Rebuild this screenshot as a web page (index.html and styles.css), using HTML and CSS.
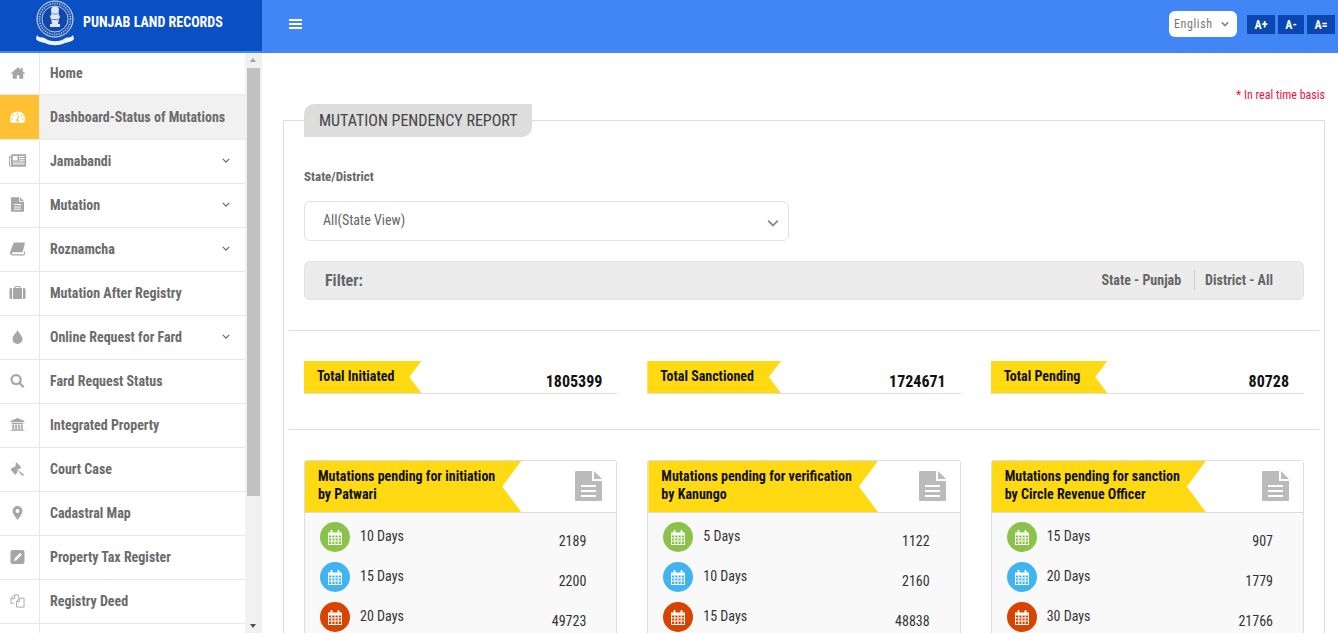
FILE: index.html
```html
<!DOCTYPE html>
<html lang="en">
<head>
<meta charset="utf-8">
<title>Punjab Land Records</title>
<link rel="stylesheet" href="styles.css">
</head>
<body>
<svg class="defs" width="0" height="0" aria-hidden="true">
  <symbol id="i-doc" viewBox="0 0 27 30"><path d="M1 0h16v10h10v19a1 1 0 0 1-1 1H1a1 1 0 0 1-1-1V1a1 1 0 0 1 1-1zM19 0l8 8h-8zM6 14v2h15v-2zM6 19v2h15v-2zM6 24v2h15v-2z" fill-rule="evenodd"/></symbol>
  <symbol id="i-cal" viewBox="0 0 14 15"><path d="M0 2.5h2.5V1a1 1 0 0 1 2 0v1.500h5V1a1 1 0 0 1 2 0v1.500H14V15H0zM1 5.500v2h2.300v-2zM4.300 5.500v2h2.200v-2zM7.500 5.500v2h2.200v-2zM10.700 5.500v2H13v-2zM1 8.500v2h2.300v-2zM4.300 8.500v2h2.200v-2zM7.500 8.500v2h2.200v-2zM10.700 8.500v2H13v-2zM1 11.500V14h2.300v-2.500zM4.300 11.500V14h2.200v-2.500zM7.500 11.500V14h2.200v-2.500zM10.700 11.500V14H13v-2.500z" fill-rule="evenodd"/></symbol>
  <symbol id="i-chev" viewBox="0 0 10 6"><path d="M1 1l4 4 4-4" fill="none" stroke="currentColor"/></symbol>
</svg>

<header class="topbar">
  <div class="brand">
    <svg class="crest" viewBox="0 0 40 46" aria-hidden="true">
      <circle cx="20" cy="19" r="18" fill="#1d55b5" stroke="#e6edf8" stroke-width="1"/>
      <circle cx="20" cy="19" r="15.500" fill="none" stroke="#b9cbec" stroke-width="1.500" stroke-dasharray="1.200 1.200"/>
      <circle cx="20" cy="19" r="13" fill="#1148ad" stroke="#dbe5f5" stroke-width=".8"/>
      <path d="M16 9c1-2 2-2.500 4-2.500s3 .5 4 2.500l-.5 5 1.500 2.500-1 2.500-1 5h2v3H15v-3h2l-1-5-1-2.500 1.500-2.500z" fill="#dfe7f4"/>
      <path d="M17.500 14h5M16.500 19.500h7" stroke="#5f86cb" stroke-width="1"/>
      <path d="M2 35c3 4 6 1 9 4 5 3 13 3 18 0 3-3 6 0 9-4l1 4c-2 3-6 3-9 4-6 3-14 3-20 0-3-1-7-1-9-4z" fill="#f1f4fa"/>
    </svg>
    <span class="brand-name">PUNJAB LAND RECORDS</span>
  </div>
  <div class="topbar-main">
    <button class="burger" aria-label="Menu"><span></span><span></span><span></span></button>
    <div class="top-tools">
      <div class="lang"><span>English</span><svg class="lang-chev"><use href="#i-chev"/></svg></div>
      <div class="font-btns">
        <span class="font-btn">A+</span><span class="font-btn narrow">A-</span><span class="font-btn">A=</span>
      </div>
    </div>
  </div>
</header>

<div class="shell">
  <aside class="sidebar">
    <nav class="menu">
      <a class="item"><span class="ico"><svg class="s-home" viewBox="0 0 24 20"><path d="M12 0L0 10.500l1.300 1.500L3 10.600V20h7v-6h4v6h7v-9.400l1.700 1.400 1.300-1.500-4-3.500V1h-3v3.200z"/></svg></span><span class="lbl">Home</span></a>
      <a class="item active"><span class="ico"><svg viewBox="0 0 24 18"><path d="M12 0a12 12 0 0 0-12 12c0 2 .5 4 1.500 6h21c1-2 1.500-4 1.500-6A12 12 0 0 0 12 0zM12 2.500a1.300 1.300 0 1 1 0 2.600 1.300 1.300 0 0 1 0-2.600zM5.500 5a1.300 1.300 0 1 1 0 2.600 1.300 1.300 0 0 1 0-2.600zM18.500 5a1.300 1.300 0 1 1 0 2.600 1.300 1.300 0 0 1 0-2.600zM3.500 10.800a1.300 1.300 0 1 1 0 2.600 1.300 1.300 0 0 1 0-2.600zM20.500 10.800a1.300 1.300 0 1 1 0 2.600 1.300 1.300 0 0 1 0-2.600zM14.500 6.500l-1.400 6.100a2 2 0 1 1-1.700-.3l1.500-6.200z" fill-rule="evenodd"/></svg></span><span class="lbl">Dashboard-Status of Mutations</span></a>
      <a class="item"><span class="ico"><svg class="s-wide" viewBox="0 0 18 13"><path d="M2.500 0H18v13H1.500A1.500 1.500 0 0 1 0 11.500V2h2.500zM1 3v8.500a.5.5 0 0 0 1 0.200V3zM4 1.800v4.700h5V1.800zM10.500 1.800v1h6v-1zM10.500 3.800v1h6v-1zM10.500 5.700v1h6v-1zM4 7.700v1h12.500v-1zM4 9.800v1h12.500v-1z" fill-rule="evenodd"/></svg></span><span class="lbl">Jamabandi</span><svg class="chev"><use href="#i-chev"/></svg></a>
      <a class="item"><span class="ico"><svg class="s-doc"><use href="#i-doc"/></svg></span><span class="lbl">Mutation</span><svg class="chev"><use href="#i-chev"/></svg></a>
      <a class="item"><span class="ico"><svg viewBox="0 0 16 14"><path d="M4 0h12l-2.500 10.500H3a1 1 0 0 0-1 1.200c.1.500.5.800 1 .8h11.500L16 8v4.500L15 14H3a3 3 0 0 1-3-3.500z"/></svg></span><span class="lbl">Roznamcha</span><svg class="chev"><use href="#i-chev"/></svg></a>
      <a class="item"><span class="ico"><svg class="s-wide" viewBox="0 0 16 13"><path d="M5 2V1a1 1 0 0 1 1-1h4a1 1 0 0 1 1 1v1h1.500v11h-9V2zM6 2h4V1H6zM0 3.500A1.500 1.500 0 0 1 1.500 2h1v11h-1A1.500 1.500 0 0 1 0 11.500zM13.500 2h1A1.500 1.500 0 0 1 16 3.500v8a1.500 1.500 0 0 1-1.500 1.500h-1z" fill-rule="evenodd"/></svg></span><span class="lbl">Mutation After Registry</span></a>
      <a class="item"><span class="ico"><svg viewBox="0 0 10 14"><path d="M5 0c1 3 5 5.500 5 9a5 5 0 0 1-10 0c0-3.500 4-6 5-9z"/></svg></span><span class="lbl">Online Request for Fard</span><svg class="chev"><use href="#i-chev"/></svg></a>
      <a class="item"><span class="ico"><svg viewBox="0 0 15 15"><path d="M6 0a6 6 0 0 1 5 9.300l4 4L13.300 15l-4-4A6 6 0 1 1 6 0zm0 2.300a3.700 3.700 0 1 0 0 7.400 3.700 3.700 0 0 0 0-7.400z" fill-rule="evenodd"/></svg></span><span class="lbl">Fard Request Status</span></a>
      <a class="item"><span class="ico"><svg class="s-wide" viewBox="0 0 16 15"><path d="M8 0l8 3.500V5H0V3.500zM1.500 5.800h13v1h-13zM2 7.500h2v4.500H2zM5.300 7.500h2v4.500h-2zM8.700 7.500h2v4.500h-2zM12 7.500h2v4.500h-2zM1.500 12.500h13v1h-13zM0 14h16v1H0z"/></svg></span><span class="lbl">Integrated Property</span></a>
      <a class="item"><span class="ico"><svg viewBox="0 0 15 15"><path d="M6 0l5.500 5.500-2.500 2.500-.7-.7-1 1L14.500 13.500 13 15 7.800 9.500l-1 1 .7.7L5 13.700 0 8l2.500-2.500.7.700 2.800-2.800-.7-.7z"/></svg></span><span class="lbl">Court Case</span></a>
      <a class="item"><span class="ico"><svg viewBox="0 0 10 14"><path d="M5 0a5 5 0 0 1 5 5c0 3-3 6-5 9-2-3-5-6-5-9a5 5 0 0 1 5-5zm0 3a2 2 0 1 0 0 4 2 2 0 0 0 0-4z" fill-rule="evenodd"/></svg></span><span class="lbl">Cadastral Map</span></a>
      <a class="item"><span class="ico"><svg viewBox="0 0 14 14"><path d="M2 0h10a2 2 0 0 1 2 2v10a2 2 0 0 1-2 2H2a2 2 0 0 1-2-2V2a2 2 0 0 1 2-2zM9.500 3L4 8.500 3.300 11l2.500-.7L11.300 4.800z" fill-rule="evenodd"/></svg></span><span class="lbl">Property Tax Register</span></a>
      <a class="item"><span class="ico"><svg viewBox="0 0 16 15" class="outline"><path d="M4 10H1V5l4-4h4v3M5 1v4H1M7 14V8l3-3.500h5V14zM10 4.500V8H7"/></svg></span><span class="lbl">Registry Deed</span></a>
      <a class="item"><span class="ico"></span><span class="lbl"></span></a>
    </nav>
    <div class="scrollbar">
      <span class="arrow up"></span>
      <span class="thumb"></span>
      <span class="arrow down"></span>
    </div>
  </aside>

  <main class="main">
    <p class="realtime">* In real time basis</p>
    <section class="panel">
      <h1 class="panel-tab">MUTATION PENDENCY REPORT</h1>
      <div class="inset">
        <label class="field-label">State/District</label>
        <div class="select"><span>All(State View)</span><svg class="select-chev"><use href="#i-chev"/></svg></div>
        <div class="filter">
          <strong class="filter-title">Filter:</strong>
          <div class="filter-vals"><span>State - Punjab</span><span class="filter-sep">District - All</span></div>
        </div>
      </div>
      <hr class="rule rule-a">
      <div class="grid3 totals inset">
        <div class="total"><span class="ribbon">Total Initiated</span><b>1805399</b></div>
        <div class="total"><span class="ribbon">Total Sanctioned</span><b>1724671</b></div>
        <div class="total"><span class="ribbon">Total Pending</span><b>80728</b></div>
      </div>
      <hr class="rule rule-b">
      <div class="grid3 inset">
        <article class="card">
          <div class="card-head"><h2>Mutations pending for initiation<br>by Patwari</h2><svg class="card-doc"><use href="#i-doc"/></svg></div>
          <ul class="rows">
            <li><span class="dot green"><svg><use href="#i-cal"/></svg></span><span class="days">10 Days</span><span class="num">2189</span></li>
            <li><span class="dot blue"><svg><use href="#i-cal"/></svg></span><span class="days">15 Days</span><span class="num">2200</span></li>
            <li><span class="dot red"><svg><use href="#i-cal"/></svg></span><span class="days">20 Days</span><span class="num">49723</span></li>
          </ul>
        </article>
        <article class="card">
          <div class="card-head"><h2>Mutations pending for verification<br>by Kanungo</h2><svg class="card-doc"><use href="#i-doc"/></svg></div>
          <ul class="rows">
            <li><span class="dot green"><svg><use href="#i-cal"/></svg></span><span class="days">5 Days</span><span class="num">1122</span></li>
            <li><span class="dot blue"><svg><use href="#i-cal"/></svg></span><span class="days">10 Days</span><span class="num">2160</span></li>
            <li><span class="dot red"><svg><use href="#i-cal"/></svg></span><span class="days">15 Days</span><span class="num">48838</span></li>
          </ul>
        </article>
        <article class="card">
          <div class="card-head"><h2>Mutations pending for sanction<br>by Circle Revenue Officer</h2><svg class="card-doc"><use href="#i-doc"/></svg></div>
          <ul class="rows">
            <li><span class="dot green"><svg><use href="#i-cal"/></svg></span><span class="days">15 Days</span><span class="num">907</span></li>
            <li><span class="dot blue"><svg><use href="#i-cal"/></svg></span><span class="days">20 Days</span><span class="num">1779</span></li>
            <li><span class="dot red"><svg><use href="#i-cal"/></svg></span><span class="days">30 Days</span><span class="num">21766</span></li>
          </ul>
        </article>
      </div>
    </section>
  </main>
</div>
</body>
</html>
```

FILE: styles.css
```css
* { box-sizing: border-box; }
html, body { margin: 0; height: 100%; overflow: hidden; }
body { font-family: Roboto, "Liberation Sans", sans-serif; font-stretch: 75%; font-size: 14px; color: #333; background: #fff; }
.defs { position: absolute; }
svg { display: block; fill: currentColor; stroke-width: 1.2; }

.topbar { display: flex; height: 53px; background: #4285f4; position: relative; z-index: 2; }
.brand { width: 262px; height: 51px; background: #0a50c4; display: flex; align-items: flex-start; padding-left: 35px; }
.crest { width: 40px; height: 46px; }
.brand-name { margin: 14px 0 0 8px; font-size: 14px; font-weight: 700; color: #fff; }
.topbar-main { flex: 1; display: flex; align-items: center; justify-content: space-between; padding: 0 3px 0 27px; }
.burger { width: 13px; padding: 0; margin-top: -5px; border: 0; background: none; display: flex; flex-direction: column; gap: 2px; }
.burger span { height: 2px; background: #fff; display: block; }
.top-tools { display: flex; align-items: center; gap: 10px; margin-top: -5px; }
.lang { width: 68px; height: 26px; background: #fff; border-radius: 6px; display: flex; align-items: center; padding-left: 5px; gap: 8px; color: #777; font-size: 12px; letter-spacing: .6px; }
.lang-chev { width: 8px; height: 6px; color: #888; stroke-width: 2; }
.font-btns { display: flex; gap: 3px; margin-top: 1px; }
.font-btn { width: 28px; height: 19px; background: #0a47b0; color: #fff; font-size: 12px; font-weight: 700; display: flex; align-items: center; justify-content: center; }
.font-btn.narrow { width: 26px; }

.shell { display: flex; height: 580px; }
.sidebar { width: 262px; flex: none; display: flex; overflow: hidden; }
.menu { width: 245px; margin-top: -2px; flex: none; }
.item { display: flex; align-items: center; height: 44px; border-bottom: 1px solid #e8e8e8; color: #6b6b6b; font-weight: 700; font-size: 14px; padding-right: 15px; }
.ico { width: 40px; height: 100%; flex: none; border-right: 1px solid #e8e8e8; display: flex; align-items: center; justify-content: center; color: #a6a6a6; padding-right: 4px; }
.ico svg { width: 15px; height: 14px; }
.ico svg.s-home { width: 14px; height: 12px; }
.ico svg.s-wide { width: 17px; height: 13px; }
.ico svg.s-doc { width: 13px; height: 15px; }
.ico svg.outline { fill: none; stroke: currentColor; stroke-width: 1; }
.lbl { flex: 1; padding-left: 10px; }
.chev { width: 8px; height: 5px; color: #666; stroke-width: 1.500; }
.item.active { height: 45px; background: #f1f1f1; }
.item.active .ico { background: #ffc033; color: #fff; }
.item.active ~ .item .lbl { padding-bottom: 2px; }
.item.active ~ .item .chev,
.item.active ~ .item .ico svg { margin-bottom: 2px; }
.scrollbar { width: 17px; background: #f1f1f1; display: flex; flex-direction: column; align-items: stretch; }
.arrow { height: 15px; flex: none; position: relative; }
.arrow::after { content: ""; position: absolute; left: 5px; border: 3.500px solid transparent; }
.arrow.up::after { top: 2px; border-bottom: 4px solid #a3a3a3; }
.arrow.down::after { bottom: 2px; border-top: 4px solid #505050; }
.thumb { height: 428px; background: #c1c1c1; margin: 0 2px; }
.scrollbar .down { margin-top: auto; }

.main { flex: 1; min-width: 0; padding: 35px 13px 0 21px; overflow: hidden; }
.realtime { margin: 0; height: 32px; text-align: right; color: #f0143c; font-size: 12px; }
.panel { border: 1px solid #ddd; }
.panel-tab { margin: -17px 0 0 20px; height: 33px; width: 228px; background: #ddd; border-radius: 10px 0 10px 0; font-size: 16px; font-weight: 400; line-height: 33px; padding-left: 15px; color: #444; }
.inset { margin: 0 20px; }
.field-label { display: block; margin-top: 27px; font-size: 13px; font-weight: 700; color: #666; line-height: 26px; }
.select { margin-top: 11px; width: 485px; height: 40px; border: 1px solid #e2e2e2; border-radius: 6px; display: flex; align-items: center; justify-content: space-between; padding: 0 9px 2px 18px; color: #666; font-size: 14px; }
.select-chev { width: 12px; height: 8px; color: #888; margin-top: 6px; stroke-width: 1.5; }
.filter { margin-top: 20px; height: 39px; background: #ececec; border: 1px solid #e2e2e2; border-radius: 6px; display: flex; align-items: center; justify-content: space-between; padding: 0 30px 0 20px; color: #666; }
.filter-title { font-size: 16px; }
.filter-vals { display: flex; align-items: center; font-weight: 700; font-size: 14px; margin-top: -1px; }
.filter-sep { border-left: 1px solid #ccc; margin-left: 13px; padding-left: 10px; line-height: 20px; }
.rule { border: 0; border-top: 1px solid #ddd; margin: 0 5px; }
.rule-a { margin-top: 30px; }
.rule-b { margin-top: 35px; }
.grid3 { display: grid; grid-template-columns: repeat(3, 1fr); gap: 30px; }
.totals { margin-top: 30px; }
.total { height: 33px; border-bottom: 1px solid #ddd; display: flex; justify-content: space-between; align-items: flex-end; color: #111; }
.ribbon { height: 32px; padding: 0 27px 2px 13px; background: #ffd911; display: flex; align-items: center; font-weight: 700; font-size: 14px; clip-path: polygon(0 0, 100% 0, calc(100% - 12px) 50%, 100% 100%, 0 100%); }
.total b { font-size: 16px; margin: 0 15px 2px 0; }
.grid3:last-child { margin-top: 30px; }
.card { border: 1px solid #ddd; border-radius: 3px; background: #f9f9f9; height: 200px; }
.card-head { height: 52px; background: #fff; border-bottom: 1px solid #ddd; display: flex; justify-content: space-between; align-items: flex-start; }
.card-head h2 { margin: 0; height: 51px; padding: 6px 26px 0 13px; background: #ffd911; font-size: 14px; font-weight: 700; line-height: 18px; color: #111; clip-path: polygon(0 0, 100% 0, calc(100% - 19px) 50%, 100% 100%, 0 100%); }
.card-doc { width: 27px; height: 30px; margin: 10px 14px 0 0; color: #bbb; }
.rows { list-style: none; margin: 0; padding: 9px 30px 0 15px; }
.rows li { display: flex; height: 40px; }
.dot { width: 30px; height: 30px; border-radius: 50%; color: #fff; display: flex; align-items: center; justify-content: center; }
.dot svg { width: 14px; height: 15px; }
.green { background: #8bc34a; }
.blue { background: #40b4f0; }
.red { background: #d84300; }
.days { margin-left: 10px; line-height: 29px; font-size: 14px; color: #333; flex: 1; }
.num { line-height: 39px; font-size: 14px; color: #333; }
```
